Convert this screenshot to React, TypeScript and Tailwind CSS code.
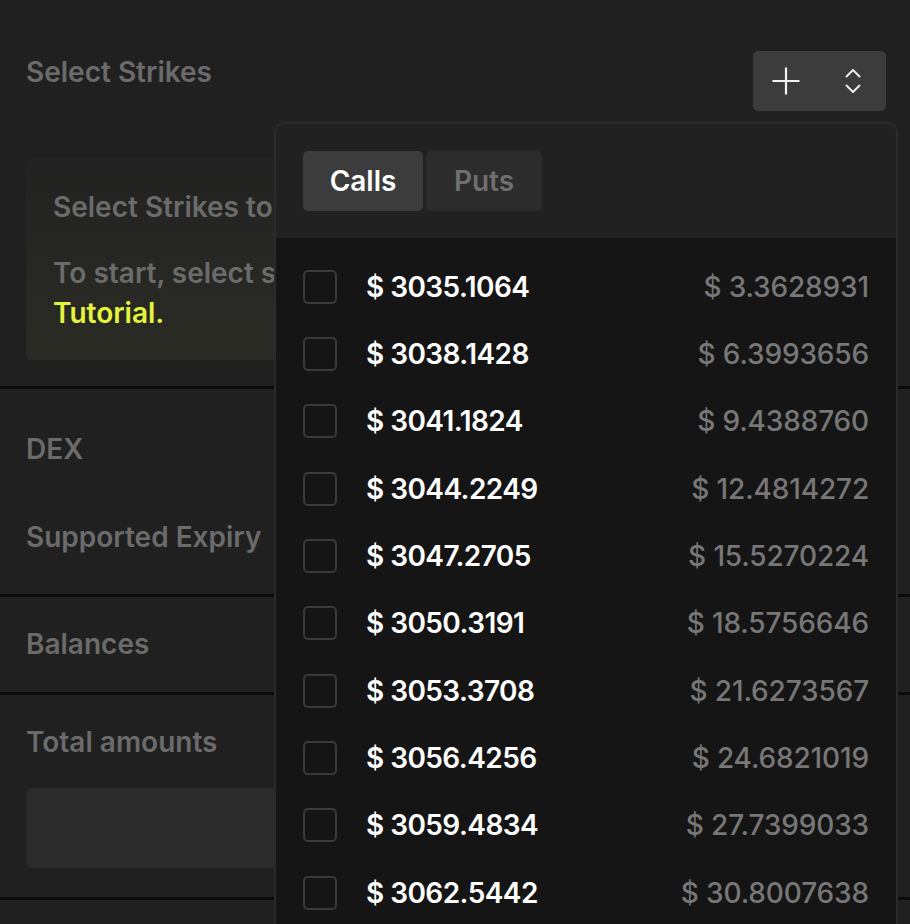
import React from "react";

const rows = [
  ["3035.1064", "3.3628931"],
  ["3038.1428", "6.3993656"],
  ["3041.1824", "9.4388760"],
  ["3044.2249", "12.4814272"],
  ["3047.2705", "15.5270224"],
  ["3050.3191", "18.5756646"],
  ["3053.3708", "21.6273567"],
  ["3056.4256", "24.6821019"],
  ["3059.4834", "27.7399033"],
  ["3062.5442", "30.8007638"],
];

function Divider() {
  return <div className="h-[3px] w-full bg-[#0b0b0b]" />;
}

export default function App() {
  return (
    <div
      className="relative w-[910px] h-[924px] overflow-hidden bg-[#202020] text-[28px] font-semibold"
      style={{ fontFamily: "Inter, 'Noto Sans', sans-serif" }}
    >
      {/* Header */}
      <div className="flex items-start justify-between pl-[26px] pr-[24px] pt-[51px]">
        <div className="mt-[4px] leading-[34px] text-[#6b6b6b]">Select Strikes</div>
        <div className="flex h-[60px] w-[133px] rounded-[5px] bg-[#3c3c3c]">
          <div className="flex flex-1 items-center justify-center">
            <svg width="30" height="30" viewBox="0 0 30 30" fill="none" stroke="#f2f2f2" strokeWidth="2.2">
              <path d="M15 1.5V28.5M1.5 15H28.5" />
            </svg>
          </div>
          <div className="flex flex-1 items-center justify-center">
            <svg width="16" height="26" viewBox="0 0 16 26" fill="none" stroke="#ececec" strokeWidth="2" strokeLinecap="round" strokeLinejoin="round">
              <path d="M1.5 8.5L8 2L14.5 8.5" />
              <path d="M1.5 17.5L8 24L14.5 17.5" />
            </svg>
          </div>
        </div>
      </div>

      {/* Info box */}
      <div className="px-[26px] pt-[47px]">
        <div className="h-[202px] overflow-hidden rounded-[5px] bg-linear-to-b from-[#222222] to-[#2b2b25] px-[27px] pt-[29px]">
          <div className="leading-[40px] text-[#6b6b6b]">Select Strikes to trade</div>
          <div className="mt-[26px] leading-[40px] text-[#6b6b6b]">
            To start, select strikes from the list
            <br />
            <span className="text-[#e4f33c]">Tutorial.</span>
          </div>
        </div>
      </div>

      <div className="mt-[26px]">
        <Divider />
      </div>

      {/* DEX section */}
      <div className="px-[26px] pt-[40px] pb-[37px] text-[#6b6b6b]">
        <div className="leading-[40px]">DEX</div>
        <div className="mt-[48px] leading-[40px]">Supported Expiry</div>
      </div>
      <Divider />

      {/* Balances */}
      <div className="px-[26px] pt-[27px] pb-[28px] text-[#6b6b6b]">
        <div className="leading-[40px]">Balances</div>
      </div>
      <Divider />

      {/* Total amounts */}
      <div className="px-[26px] pt-[27px] pb-[29px] text-[#6b6b6b]">
        <div className="leading-[40px]">Total amounts</div>
        <div className="mt-[26px] h-[80px] rounded-[6px] bg-[#2b2b2b]" />
      </div>
      <Divider />

      {/* Dropdown overlay */}
      <div className="absolute left-[274px] top-[122px] bottom-0 w-[624px] overflow-hidden rounded-t-[10px] border-x-2 border-t-2 border-[#2b2b2b] bg-[#212121]">
        <div className="flex gap-[3px] px-[27px] pt-[27px] pb-[27px]">
          <div className="flex h-[60px] w-[120px] items-center justify-center rounded-[5px] bg-[#3c3c3c] text-white">
            Calls
          </div>
          <div className="flex h-[60px] w-[116px] items-center justify-center rounded-[5px] bg-[#2c2c2c] text-[#6f6f6f]">
            Puts
          </div>
        </div>
        <div className="h-full bg-[#151515] pt-[15px]">
          {rows.map(([strike, premium]) => (
            <div key={strike} className="flex h-[67.33px] items-center pl-[27px] pr-[27px]">
              <div className="h-[34px] w-[34px] rounded-[5px] border-2 border-[#3a3a3a]" />
              <div className="ml-[29px] tracking-[-0.02em] text-white">$ {strike}</div>
              <div className="ml-auto font-medium tracking-[-0.005em] text-[#777777]">$ {premium}</div>
            </div>
          ))}
        </div>
      </div>
    </div>
  );
}
